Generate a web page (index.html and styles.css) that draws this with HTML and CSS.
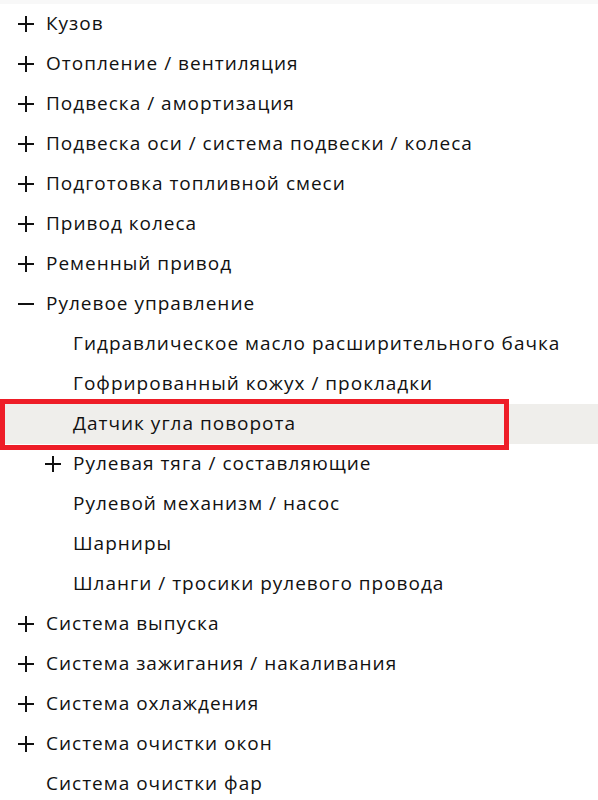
FILE: index.html
```html
<!DOCTYPE html>
<html lang="ru">
<head>
<meta charset="utf-8">
<link rel="stylesheet" href="styles.css">
</head>
<body>
<div class="topband"></div>
<ul class="tree">
  <li class="row"><span class="ico plus"></span><span class="label">Кузов</span></li>
  <li class="row"><span class="ico plus"></span><span class="label">Отопление / вентиляция</span></li>
  <li class="row"><span class="ico plus"></span><span class="label">Подвеска / амортизация</span></li>
  <li class="row"><span class="ico plus"></span><span class="label">Подвеска оси / система подвески / колеса</span></li>
  <li class="row"><span class="ico plus"></span><span class="label">Подготовка топливной смеси</span></li>
  <li class="row"><span class="ico plus"></span><span class="label">Привод колеса</span></li>
  <li class="row"><span class="ico plus"></span><span class="label">Ременный привод</span></li>
  <li class="row"><span class="ico minus"></span><span class="label">Рулевое управление</span></li>
  <li class="row child"><span class="label">Гидравлическое масло расширительного бачка</span></li>
  <li class="row child"><span class="label">Гофрированный кожух / прокладки</span></li>
  <li class="row child active"><span class="label">Датчик угла поворота</span><span class="mark"></span></li>
  <li class="row child has-ico"><span class="ico plus"></span><span class="label">Рулевая тяга / составляющие</span></li>
  <li class="row child"><span class="label">Рулевой механизм / насос</span></li>
  <li class="row child"><span class="label">Шарниры</span></li>
  <li class="row child"><span class="label">Шланги / тросики рулевого провода</span></li>
  <li class="row"><span class="ico plus"></span><span class="label">Система выпуска</span></li>
  <li class="row"><span class="ico plus"></span><span class="label">Система зажигания / накаливания</span></li>
  <li class="row"><span class="ico plus"></span><span class="label">Система охлаждения</span></li>
  <li class="row"><span class="ico plus"></span><span class="label">Система очистки окон</span></li>
  <li class="row"><span class="ico"></span><span class="label">Система очистки фар</span></li>
</ul>
</body>
</html>
```
FILE: styles.css
```css
html, body {
  margin: 0;
  padding: 0;
  background: #ffffff;
}
body {
  font-family: "Open Sans", "Liberation Sans", Arial, sans-serif;
  font-size: 19px;
  letter-spacing: 1px;
  color: #111111;
  overflow: hidden;
}
.topband {
  height: 4px;
  background: #f8f8f8;
}
.tree {
  list-style: none;
  margin: 0;
  padding: 0;
}
.row {
  display: flex;
  align-items: center;
  height: 40px;
  padding-left: 18px;
  box-sizing: border-box;
  white-space: nowrap;
}
.label {
  position: relative;
  top: -1px;
}
.row.child {
  padding-left: 73px;
}
.row.child.has-ico {
  padding-left: 45px;
}
.ico {
  position: relative;
  flex: none;
  width: 28px;
  height: 16px;
}
.ico.plus::before,
.ico.plus::after,
.ico.minus::before {
  content: "";
  position: absolute;
  background: #111111;
}
.ico.plus::before,
.ico.minus::before {
  left: 0;
  top: 7px;
  width: 16px;
  height: 2px;
}
.ico.plus::after {
  left: 7px;
  top: 0;
  width: 2px;
  height: 16px;
}
.row.active {
  position: relative;
  background: #efeeeb;
  border-left: 3px solid #fbb01f;
  padding-left: 70px;
}
.mark {
  position: absolute;
  left: -3px;
  top: -5px;
  width: 509px;
  height: 51px;
  border: 5px solid #ee1d27;
  box-sizing: border-box;
}
```
